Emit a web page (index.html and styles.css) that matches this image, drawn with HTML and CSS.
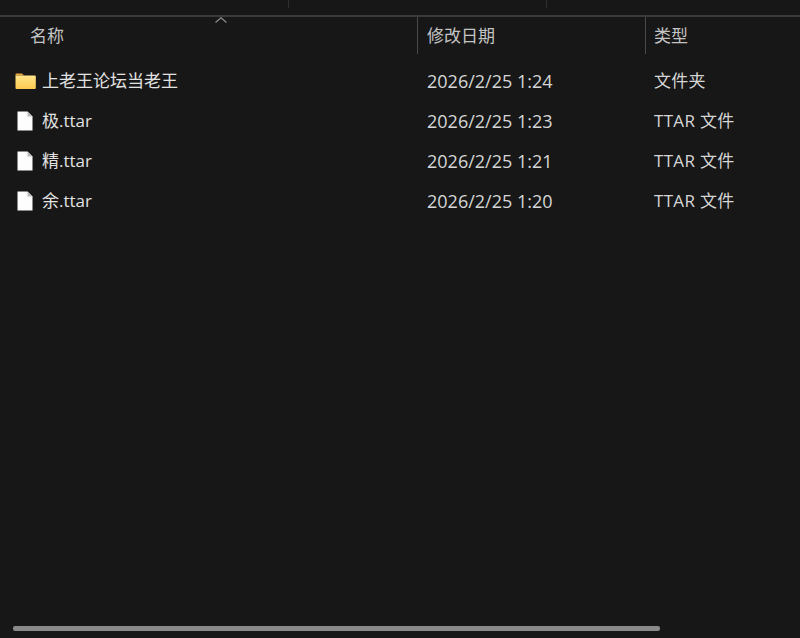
FILE: index.html
```html
<!DOCTYPE html>
<html lang="zh-CN">
<head>
<meta charset="utf-8">
<title>文件列表</title>
<link rel="stylesheet" href="styles.css">
</head>
<body>
<svg class="defs" width="0" height="0" aria-hidden="true">
  <defs>
    <linearGradient id="fg" x1="0" y1="0" x2="0" y2="1">
      <stop offset="0" stop-color="#ffe58a"/>
      <stop offset="1" stop-color="#fcc94f"/>
    </linearGradient>
    <symbol id="folder" viewBox="0 0 21 18">
      <path d="M0.500 2.500a1 1 0 0 1 1-1h5.500l2 2h-8.500z" fill="#e8a93a"/>
      <path d="M0.500 3.500h19.500a0.800 0.800 0 0 1 0.800 0.800v11.700a1 1 0 0 1-1 1h-18.300a1 1 0 0 1-1-1z" fill="url(#fg)"/>
    </symbol>
    <symbol id="file" viewBox="0 0 16 20">
      <path d="M0.500 0.500h10l5 5v14h-15z" fill="#fdfdfd"/>
      <path d="M10.500 0.500v5h5z" fill="#bdbdbd"/>
    </symbol>
  </defs>
</svg>
<main class="explorer">
  <div class="toolbar">
    <span class="tick tick-a"></span>
    <span class="tick tick-b"></span>
  </div>
  <div class="header">
    <div class="head-cell head-name">名称<span class="sort"><svg width="12" height="6" viewBox="0 0 12 6"><path d="M0.500 5.500L6 0.700l5.500 4.800" fill="none" stroke="#8c8c8c" stroke-width="1.200"/></svg></span></div>
    <div class="head-cell head-sep">修改日期</div>
    <div class="head-cell head-sep">类型</div>
  </div>
  <div class="rows">
    <div class="row">
      <div class="name"><svg class="icon icon-folder"><use href="#folder"/></svg>上老王论坛当老王</div>
      <div class="cell date">2026/2/25 1:24</div>
      <div class="cell type">文件夹</div>
    </div>
    <div class="row">
      <div class="name"><svg class="icon icon-file"><use href="#file"/></svg>极.ttar</div>
      <div class="cell date">2026/2/25 1:23</div>
      <div class="cell type">TTAR 文件</div>
    </div>
    <div class="row">
      <div class="name"><svg class="icon icon-file"><use href="#file"/></svg>精.ttar</div>
      <div class="cell date">2026/2/25 1:21</div>
      <div class="cell type">TTAR 文件</div>
    </div>
    <div class="row">
      <div class="name"><svg class="icon icon-file"><use href="#file"/></svg>余.ttar</div>
      <div class="cell date">2026/2/25 1:20</div>
      <div class="cell type">TTAR 文件</div>
    </div>
  </div>
  <div class="scroll"><div class="thumb"></div></div>
</main>
</body>
</html>
```
FILE: styles.css
```css
* { box-sizing: border-box; }
html, body { margin: 0; height: 100%; }
body {
  background: #171717;
  color: #d6d6d6;
  font-family: "Open Sans", "Noto Sans CJK SC", sans-serif;
  font-size: 17px;
  overflow: hidden;
}
.defs { position: absolute; }
.explorer {
  height: 638px;
  display: flex;
  flex-direction: column;
}
.toolbar {
  height: 17px;
  border-bottom: 2px solid #3a3a3a;
  display: flex;
  padding-left: 288px;
  flex: none;
}
.tick {
  width: 1px;
  height: 8px;
  background: #2f2f2f;
}
.tick-b { margin-left: 257px; }
.header, .row {
  display: grid;
  grid-template-columns: 417px 228px 1fr;
}
.header {
  height: 37px;
  flex: none;
  color: #c4c4c4;
}
.head-cell {
  display: flex;
  align-items: center;
  padding-left: 8px;
  padding-bottom: 2px;
}
.head-name {
  padding-left: 30px;
  position: relative;
}
.head-sep { border-left: 1px solid #4a4a4a; }
.head-sep:nth-child(2) { padding-left: 9px; }
.sort {
  position: absolute;
  left: 215px;
  top: 0;
  line-height: 0;
}
.rows {
  flex: 1;
  padding-top: 7px;
}
.row {
  height: 40px;
  align-items: center;
  line-height: 24px;
}
.name {
  display: flex;
  align-items: center;
  padding-left: 15px;
  color: #e2e2e2;
}
.cell { padding-left: 9px; }
.date { padding-left: 10px; font-size: 18px; }
.type { letter-spacing: 0.3px; }
.icon { flex: none; }
.icon-folder { width: 21px; height: 18px; margin-right: 6px; }
.icon-file { width: 16px; height: 20px; margin: 0 9px 0 2px; }
.scroll {
  height: 12px;
  padding: 0 0 7px 13px;
  flex: none;
}
.thumb {
  width: 647px;
  height: 5px;
  border-radius: 2px;
  background: #8a8a8a;
}
```
